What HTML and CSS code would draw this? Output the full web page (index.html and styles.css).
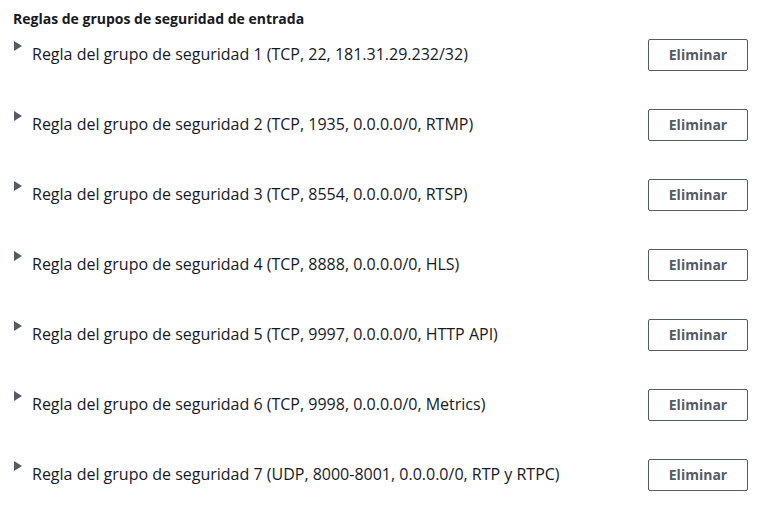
FILE: index.html
```html
<!DOCTYPE html>
<html lang="es">
<head>
<meta charset="utf-8">
<link rel="stylesheet" href="styles.css">
</head>
<body>
<div class="panel">
  <h2 class="title">Reglas de grupos de seguridad de entrada</h2>
  <div class="row"><div class="label"><span class="caret"></span><span>Regla del grupo de seguridad 1 (TCP, 22, 181.31.29.232/32)</span></div><button class="btn">Eliminar</button></div>
  <div class="row"><div class="label"><span class="caret"></span><span>Regla del grupo de seguridad 2 (TCP, 1935, 0.0.0.0/0, RTMP)</span></div><button class="btn">Eliminar</button></div>
  <div class="row"><div class="label"><span class="caret"></span><span>Regla del grupo de seguridad 3 (TCP, 8554, 0.0.0.0/0, RTSP)</span></div><button class="btn">Eliminar</button></div>
  <div class="row"><div class="label"><span class="caret"></span><span>Regla del grupo de seguridad 4 (TCP, 8888, 0.0.0.0/0, HLS)</span></div><button class="btn">Eliminar</button></div>
  <div class="row"><div class="label"><span class="caret"></span><span>Regla del grupo de seguridad 5 (TCP, 9997, 0.0.0.0/0, HTTP API)</span></div><button class="btn">Eliminar</button></div>
  <div class="row"><div class="label"><span class="caret"></span><span>Regla del grupo de seguridad 6 (TCP, 9998, 0.0.0.0/0, Metrics)</span></div><button class="btn">Eliminar</button></div>
  <div class="row"><div class="label"><span class="caret"></span><span>Regla del grupo de seguridad 7 (UDP, 8000-8001, 0.0.0.0/0, RTP y RTPC)</span></div><button class="btn">Eliminar</button></div>
</div>
</body>
</html>
```
FILE: styles.css
```css
html, body { margin: 0; padding: 0; background: #fff; }
body { font-family: "Open Sans", "Noto Sans", sans-serif; color: #16191f; }
.panel { padding: 0 14px 0 13px; }
.title { margin: 0; padding: 9px 0 10px 0; font-size: 14px; line-height: 20px; font-weight: 700; }
.row { display: flex; justify-content: space-between; align-items: flex-start; height: 70px; }
.label { display: flex; align-items: flex-start; font-size: 16px; line-height: 30px; }
.caret { width: 0; height: 0; border-top: 5px solid transparent; border-bottom: 5px solid transparent; border-left: 8px solid #545b64; margin: 2px 10px 0 1px; }
.btn { width: 100px; height: 32px; box-sizing: border-box; border: 1px solid #545b64; border-radius: 2px; background: #fff; color: #545b64; font-family: inherit; font-weight: 700; font-size: 14px; line-height: 28px; padding: 0; }
```
